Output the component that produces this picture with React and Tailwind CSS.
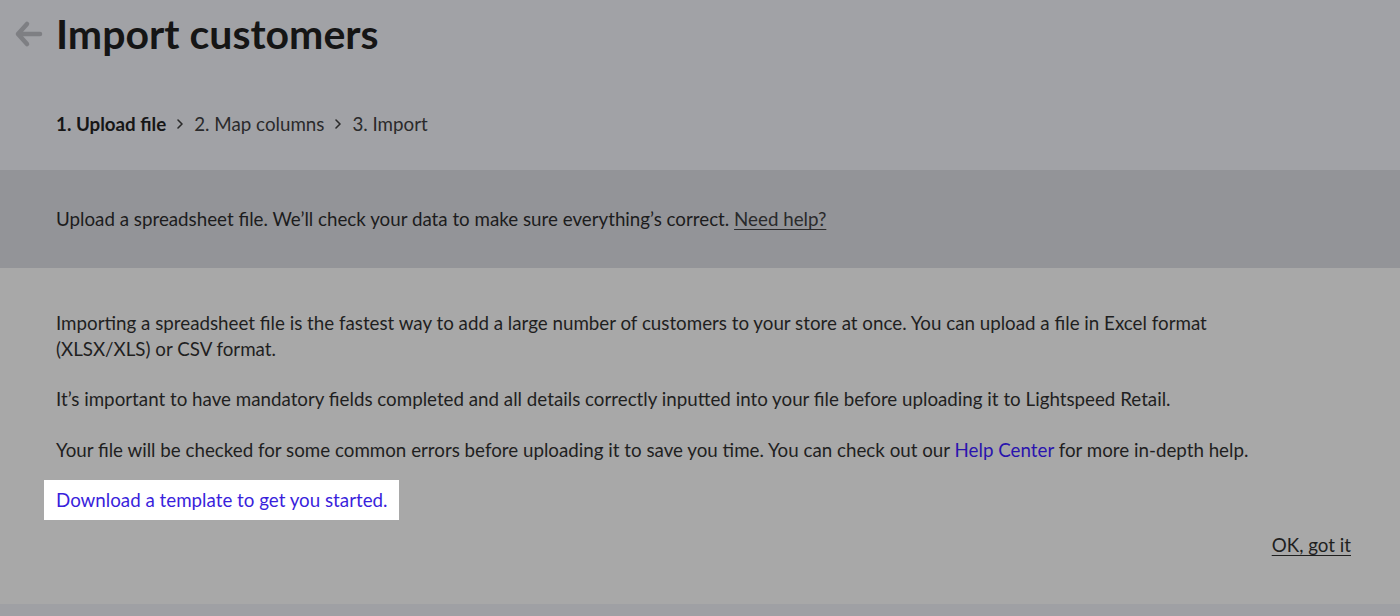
import React from "react";

function BackArrow() {
  return (
    <svg width="30" height="30" viewBox="0 0 30 30" fill="none" className="shrink-0">
      <path
        d="M27 15H5M14 5L5 15L14 25"
        stroke="#7e7f83"
        strokeWidth="4.5"
        strokeLinecap="round"
        strokeLinejoin="round"
      />
    </svg>
  );
}

function Chevron() {
  return (
    <svg width="8" height="12" viewBox="0 0 8 12" fill="none" className="mx-[10px]">
      <path d="M2 2l4 4-4 4" stroke="#2b2b2b" strokeWidth="1.6" strokeLinecap="round" strokeLinejoin="round" />
    </svg>
  );
}

export default function App() {
  return (
    <div
      className="w-full h-[616px] overflow-hidden flex flex-col text-[18.75px] text-[#222]"
      style={{ fontFamily: "Lato, 'Open Sans', sans-serif" }}
    >
      {/* page header + steps */}
      <div className="bg-[#a1a2a6] h-[170px] shrink-0">
        <div className="flex items-center pl-[13px] pt-[10px] gap-[13px]">
          <BackArrow />
          <h1 className="text-[41px] leading-[48px] font-bold text-[#151515]">Import customers</h1>
        </div>
        <div className="flex items-center pl-[56px] mt-[53px] leading-[26px] text-[#2a2a2b]">
          <span className="font-bold text-[#161616]">1. Upload file</span>
          <Chevron />
          <span>2. Map columns</span>
          <Chevron />
          <span>3. Import</span>
        </div>
      </div>

      {/* intro banner */}
      <div className="bg-[#939498] h-[98px] shrink-0 flex items-center pl-[56px] leading-[26px] text-[#1c1c1d]">
        <span>
          Upload a spreadsheet file. We’ll check your data to make sure everything’s correct.{" "}
          <a href="#" className="underline underline-offset-[3px] text-[#2a2a2b]">Need help?</a>
        </span>
      </div>

      {/* instructions */}
      <div className="bg-[#a8a8a8] flex-1 pl-[56px] pr-[49px] pt-[42px] leading-[26px] text-[#1f1f1f]">
        <div className="max-w-[1200px]">
          <p className="mb-[24px]">
            Importing a spreadsheet file is the fastest way to add a large number of customers to your store at once. You can upload a file in Excel format (XLSX/XLS) or CSV format.
          </p>
          <p className="mb-[25px]">
            It’s important to have mandatory fields completed and all details correctly inputted into your file before uploading it to Lightspeed Retail.
          </p>
          <p className="mb-[17px]">
            Your file will be checked for some common errors before uploading it to save you time. You can check out our{" "}
            <a href="#" className="text-[#2a14ae]">Help Center</a> for more in-depth help.
          </p>
        </div>
        <div className="flex">
          <div className="bg-white -ml-[12px] px-[12px] py-[7px]">
            <a href="#" className="text-[#3a1fdc]">Download a template to get you started.</a>
          </div>
        </div>
        <div className="flex justify-end mt-[12px]">
          <a href="#" className="underline underline-offset-[3px] text-[#1f1f1f]">OK, got it</a>
        </div>
      </div>

      <div className="bg-[#9fa0a4] h-[12px] shrink-0" />
    </div>
  );
}
